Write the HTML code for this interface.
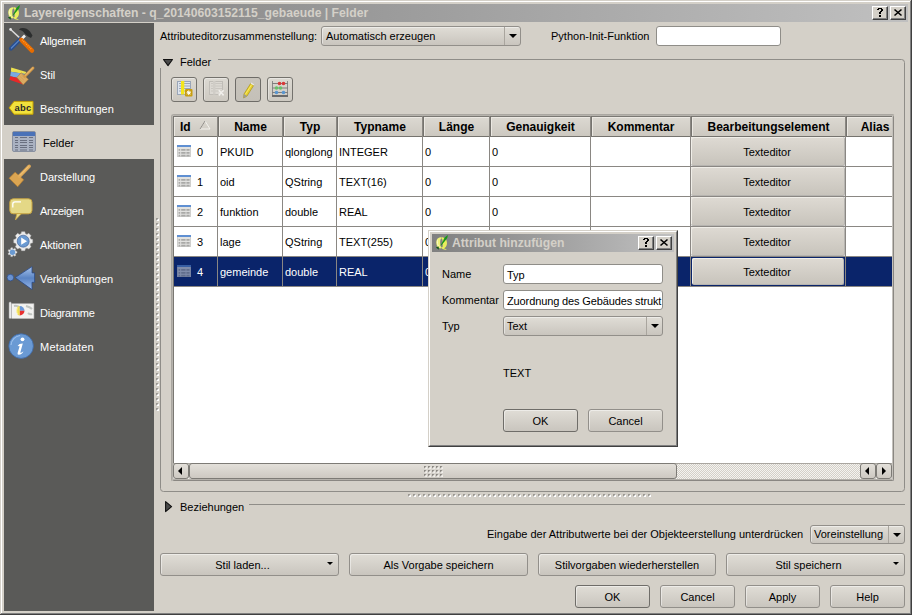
<!DOCTYPE html>
<html><head><meta charset="utf-8">
<style>
*{box-sizing:border-box;margin:0;padding:0}
html,body{width:912px;height:615px;overflow:hidden;background:#d4d0c8;position:relative;font-family:"Liberation Sans",sans-serif;font-size:11px;color:#000}
.a{position:absolute}
.t{position:absolute;white-space:nowrap;font-size:11px;line-height:13px}
.b{font-weight:bold}
.w{color:#fff}
svg{position:absolute;overflow:visible}
</style></head><body>
<div class="a" style="left:1px;top:1px;width:910px;height:1px;background:#fff"></div>
<div class="a" style="left:1px;top:1px;width:1px;height:613px;background:#fff"></div>
<div class="a" style="left:910px;top:1px;width:1px;height:613px;background:#808080"></div>
<div class="a" style="left:1px;top:613px;width:910px;height:1px;background:#808080"></div>
<div class="a" style="left:911px;top:0px;width:1px;height:615px;background:#404040"></div>
<div class="a" style="left:0px;top:614px;width:912px;height:1px;background:#404040"></div>
<div class="a" style="left:4px;top:4px;width:904px;height:18px;background:linear-gradient(to right,#808080,#c0c0c0)"></div>
<svg style="left:4px;top:4px" width="20" height="18" viewBox="0 0 20 18">
<path d="M8.8 3.2 C5.1 3.4 4.2 6.5 4.3 9.2 C4.5 12.2 6.2 14.2 9.2 14.4 L9 12.8 C8.4 11.6 8.1 9.8 8.2 8 C8.3 6 8.6 4.8 9.6 4.3Z" fill="#eef27a"/>
<path d="M5.6 6.2 C5.2 8.2 5.4 10.6 6.6 12.2" stroke="#fbfcc8" stroke-width="1" fill="none"/>
<path d="M9.2 3.2 C13 3.1 15 5.8 15 9 C15 12 13.6 14.2 11 14.4 L10.6 12.9 C10.6 12 10.8 10.6 10.8 8.8 C10.8 6.5 10.4 4.8 9.6 4.4Z" fill="#e8ee5c"/>
<path d="M8.8 13.2 Q10.6 16.4 15 15.4 Q12.6 15.2 11 13Z" fill="#e8ee5c"/>
<path d="M8.4 11.4 L11.2 6.8 Q12 3.2 16 1 Q15.8 4.6 13 7 L9.2 11.6Z" fill="#17961a"/>
<path d="M3.8 13.4 L6.6 12.6 L7 15.8Z" fill="#145a16"/>
</svg>
<div class="t b" style="left:24px;top:6px;font-size:12.2px;line-height:14px;color:#d4d0c8">Layereigenschaften - q_20140603152115_gebaeude | Felder</div>
<div class="a" style="left:872px;top:6px;width:16px;height:14px;background:#d4d0c8;border-top:1px solid #fff;border-left:1px solid #fff;border-right:1px solid #404040;border-bottom:1px solid #404040;box-shadow:inset -1px -1px 0 #808080"></div>
<svg style="left:877px;top:8px" width="6" height="9" viewBox="0 0 6 9" shape-rendering="crispEdges" fill="#000"><rect x="1" y="0" width="1" height="1"/><rect x="2" y="0" width="1" height="1"/><rect x="3" y="0" width="1" height="1"/><rect x="4" y="0" width="1" height="1"/><rect x="0" y="1" width="1" height="1"/><rect x="1" y="1" width="1" height="1"/><rect x="4" y="1" width="1" height="1"/><rect x="5" y="1" width="1" height="1"/><rect x="4" y="2" width="1" height="1"/><rect x="5" y="2" width="1" height="1"/><rect x="3" y="3" width="1" height="1"/><rect x="4" y="3" width="1" height="1"/><rect x="2" y="4" width="1" height="1"/><rect x="3" y="4" width="1" height="1"/><rect x="2" y="5" width="1" height="1"/><rect x="3" y="5" width="1" height="1"/><rect x="2" y="7" width="1" height="1"/><rect x="3" y="7" width="1" height="1"/><rect x="2" y="8" width="1" height="1"/><rect x="3" y="8" width="1" height="1"/></svg>
<div class="a" style="left:890px;top:6px;width:16px;height:14px;background:#d4d0c8;border-top:1px solid #fff;border-left:1px solid #fff;border-right:1px solid #404040;border-bottom:1px solid #404040;box-shadow:inset -1px -1px 0 #808080"></div>
<svg style="left:894px;top:9px" width="8" height="7" viewBox="0 0 8 7"><path d="M0.5 0.5L7.5 6.5M7.5 0.5L0.5 6.5" stroke="#000" stroke-width="1.6"/></svg>
<div class="a" style="left:4px;top:23px;width:150px;height:588px;background:#5a5a58"></div>
<div class="a" style="left:4px;top:125px;width:150px;height:34px;background:#d4d0c8"></div>
<div class="t w" style="left:40px;top:35px;letter-spacing:-0.29px">Allgemein</div>
<div class="t w" style="left:40px;top:69px;letter-spacing:0px">Stil</div>
<div class="t w" style="left:40px;top:103px;letter-spacing:0.04px">Beschriftungen</div>
<div class="t" style="left:43px;top:137px;">Felder</div>
<div class="t w" style="left:40px;top:171px;letter-spacing:-0.04px">Darstellung</div>
<div class="t w" style="left:40px;top:205px;letter-spacing:-0.3px">Anzeigen</div>
<div class="t w" style="left:40px;top:239px;letter-spacing:-0.14px">Aktionen</div>
<div class="t w" style="left:40px;top:273px;letter-spacing:-0.08px">Verknüpfungen</div>
<div class="t w" style="left:40px;top:307px;letter-spacing:-0.25px">Diagramme</div>
<div class="t w" style="left:40px;top:341px;letter-spacing:0.22px">Metadaten</div>
<svg style="left:6px;top:25px" width="32" height="32" viewBox="0 0 32 32">
<path d="M4.4 4.2 L14.5 13.6" stroke="#d8d8d8" stroke-width="1.5" stroke-linecap="round"/><circle cx="4.6" cy="4.4" r="1.3" fill="#e8e8e8"/>
<path d="M14.5 14 L5 23.5" stroke="#2a4f8c" stroke-width="4.2" stroke-linecap="round"/>
<path d="M13.8 14.6 L5.4 23" stroke="#5a86c8" stroke-width="1.2" stroke-linecap="round"/>
<path d="M13 4.2 C16 2.2 21 3 24 6.5 L26.5 10.5 L25 13 L22 11.5 L19 9 C17.5 6.5 15.5 5.4 13 4.6Z" fill="#2c2e2e"/>
<path d="M15.5 14 L19 10.5" stroke="#f0f0f0" stroke-width="2.6"/>
<path d="M15.2 14.8 L26 25.6" stroke="#e66c00" stroke-width="4.4" stroke-linecap="round"/>
<path d="M16 14.8 L25.5 24.3" stroke="#ff9a30" stroke-width="1.4" stroke-dasharray="1 1"/>
</svg>
<svg style="left:6px;top:59px" width="32" height="32" viewBox="0 0 32 32">
<path d="M5.2 8.6 L20.3 13 L19.3 15.1 L4.9 12.8Z" fill="#ece050"/>
<path d="M4.9 12.8 L19.3 15.1 L10.9 18.75 L4.2 17.2Z" fill="#7aaae0"/>
<path d="M4.2 17.2 L10.9 18.75 L17.2 25.5 L3.4 20.8Z" fill="#e82828"/>
<path d="M10.9 18.5 L15.1 13.8 L22.4 20.3 L17.2 25.8Z" fill="#dcac64" stroke="#b07c30" stroke-width="0.6"/><path d="M12.5 19 L16 22.5 M14 17.5 L17.8 21 M15.5 16 L19.4 19.6" stroke="#c89446" stroke-width="0.5"/>
<path d="M18.8 17.2 L27 9.1" stroke="#d49a48" stroke-width="2.8" stroke-linecap="round"/><path d="M19.6 16 L26.6 9" stroke="#ecc488" stroke-width="0.9" stroke-linecap="round"/>
</svg>
<svg style="left:6px;top:93px" width="32" height="32" viewBox="0 0 32 32">
<path d="M3.2 14.8 L8 8.4 H27 V21.2 H8Z" fill="#f2e23c" stroke="#c8a400" stroke-width="1"/>
<text x="8.6" y="17.6" font-family="Liberation Sans" font-weight="bold" font-size="9.4" fill="#2a2a2a" letter-spacing="0.2">abc</text>
</svg>
<svg style="left:12px;top:131px" width="24" height="21" viewBox="0 0 24 21">
<rect x="0.5" y="0.5" width="23" height="20" rx="1.5" fill="#aab2c2" stroke="#8890a0"/>
<rect x="1" y="1" width="22" height="4" fill="#4a72b8"/>
<path d="M3 6.5H6M8 6.5H15M17 6.5H21M3 9.5H6M8 9.5H15M17 9.5H21M3 11.5H6M8 11.5H15M17 11.5H21M3 14.5H6M8 14.5H15M17 14.5H21M3 16.5H6M8 16.5H15M17 16.5H21M3 19H6M8 19H15M17 19H21" stroke="#6a7080" stroke-width="1"/>
</svg>
<svg style="left:6px;top:161px" width="32" height="32" viewBox="0 0 32 32">
<path d="M3.1 17.2 L9.1 11.2 L17.7 18.75 L11.7 25.8Z" fill="#dba552" stroke="#b88030" stroke-width="0.7"/>
<path d="M13.4 15.2 L23.2 5.2" stroke="#e0aa58" stroke-width="3.4" stroke-linecap="round"/><path d="M14.2 14.2 L22.6 5.6" stroke="#f0c880" stroke-width="1" stroke-linecap="round"/>
</svg>
<svg style="left:6px;top:195px" width="32" height="32" viewBox="0 0 32 32">
<rect x="3.8" y="3.8" width="22.2" height="15" rx="3.5" fill="#e4d886" stroke="#c8a440" stroke-width="1"/>
<path d="M10.9 18.5 L9.4 25 L15.6 18.5Z" fill="#e4d886" stroke="#c8a440" stroke-width="0.8"/>
<path d="M6.8 12.5 V9 Q6.8 6.8 9 6.8 H15" fill="none" stroke="#ffffff" stroke-width="1.3"/>
</svg>
<svg style="left:6px;top:229px" width="32" height="32" viewBox="0 0 32 32">
<path d="M24.70 10.04 L26.66 10.59 L26.66 13.81 L24.70 14.36 L24.02 15.98 L25.03 17.76 L22.76 20.03 L20.98 19.02 L19.36 19.70 L18.81 21.66 L15.59 21.66 L15.04 19.70 L13.42 19.02 L11.64 20.03 L9.37 17.76 L10.38 15.98 L9.70 14.36 L7.74 13.81 L7.74 10.59 L9.70 10.04 L10.38 8.42 L9.37 6.64 L11.64 4.37 L13.42 5.38 L15.04 4.70 L15.59 2.74 L18.81 2.74 L19.36 4.70 L20.98 5.38 L22.76 4.37 L25.03 6.64 L24.02 8.42Z" fill="#ececec" stroke="#b8b8b8" stroke-width="0.5"/>
<circle cx="17.2" cy="12.2" r="6" fill="#6a9ad2" stroke="#3a5a90" stroke-width="0.6"/>
<path d="M15.2 8.6 L21 12.2 L15.2 15.8Z" fill="#fff"/>
<path d="M9.75 22.20 L11.03 22.38 L11.03 24.02 L9.75 24.20 L9.31 25.11 L9.97 26.22 L8.68 27.25 L7.74 26.37 L6.76 26.59 L6.30 27.80 L4.69 27.43 L4.80 26.14 L4.01 25.51 L2.78 25.91 L2.07 24.42 L3.14 23.70 L3.14 22.70 L2.07 21.98 L2.78 20.49 L4.01 20.89 L4.80 20.26 L4.69 18.97 L6.30 18.60 L6.76 19.81 L7.74 20.03 L8.68 19.15 L9.97 20.18 L9.31 21.29Z" fill="#ececec" stroke="#b8b8b8" stroke-width="0.4"/>
<circle cx="6.5" cy="23.2" r="2.7" fill="#6a9ad2"/>
</svg>
<svg style="left:6px;top:263px" width="32" height="32" viewBox="0 0 32 32">
<defs><linearGradient id="vg" x1="0" y1="0" x2="0" y2="1"><stop offset="0" stop-color="#a8c4ec"/><stop offset="0.5" stop-color="#5a84c4"/><stop offset="1" stop-color="#98b8ea"/></linearGradient></defs>
<circle cx="4.4" cy="14.6" r="3.3" fill="#6a92d0" stroke="#2a4a88" stroke-width="0.7"/>
<path d="M9.1 14.6 L26 3.6 V9.9 H28.6 V19.3 H26 V26.6Z" fill="url(#vg)" stroke="#2a4a88" stroke-width="0.8"/>
</svg>
<svg style="left:6px;top:297px" width="32" height="32" viewBox="0 0 32 32">
<rect x="5.7" y="6.8" width="22.2" height="14.6" fill="#f2f2f0" stroke="#c8c8c8" stroke-width="0.6"/>
<path d="M8 9 Q12 8 14 11 M20 9 Q24 10 26 12 M22 16 Q24 18 26 17" stroke="#c0c4c0" stroke-width="2" fill="none"/>
<rect x="3.1" y="5" width="2.1" height="16.6" rx="1" fill="#f4f4f4" stroke="#b0b0b0" stroke-width="0.5"/>
<path d="M13.8 9.1 A3.2 4.7 0 0 0 13.8 18.5Z" fill="#eedc50"/><path d="M12 10.5 A2 3.5 0 0 0 12 17" stroke="#fff6b0" stroke-width="0.8" fill="none"/>
<path d="M13.8 9.1 A4.7 4.7 0 0 1 18.5 13.8 H13.8Z" fill="#6a98d8"/>
<path d="M18.5 13.8 A4.7 4.7 0 0 1 13.8 18.5 V13.8Z" fill="#e83030"/>
</svg>
<svg style="left:6px;top:331px" width="32" height="32" viewBox="0 0 32 32">
<circle cx="15.1" cy="15.1" r="12.3" fill="#6a9ad4" stroke="#3e6aa8" stroke-width="0.8"/>
<path d="M5 14 A11 11 0 0 1 14 4.5" stroke="#9cc0ec" stroke-width="1.2" fill="none"/>
<circle cx="16.5" cy="8.3" r="1.9" fill="#fff"/>
<path d="M11.6 15 Q13 12.5 16.8 12.6 L14.3 21.5 Q14.6 22.3 17.4 20.2 Q16.3 23.5 12.6 23.8 Q11.2 23.5 11.6 22 L13.6 15.2 Q12.6 15 11.6 15Z" fill="#fff"/>
</svg>
<div class="a" style="left:156px;top:218px;width:3px;height:3px;background:linear-gradient(135deg,#9c9993 0,#9c9993 40%,#fff 60%,#fff 100%)"></div>
<div class="a" style="left:156px;top:223px;width:3px;height:3px;background:linear-gradient(135deg,#9c9993 0,#9c9993 40%,#fff 60%,#fff 100%)"></div>
<div class="a" style="left:156px;top:228px;width:3px;height:3px;background:linear-gradient(135deg,#9c9993 0,#9c9993 40%,#fff 60%,#fff 100%)"></div>
<div class="a" style="left:156px;top:233px;width:3px;height:3px;background:linear-gradient(135deg,#9c9993 0,#9c9993 40%,#fff 60%,#fff 100%)"></div>
<div class="a" style="left:156px;top:238px;width:3px;height:3px;background:linear-gradient(135deg,#9c9993 0,#9c9993 40%,#fff 60%,#fff 100%)"></div>
<div class="a" style="left:156px;top:243px;width:3px;height:3px;background:linear-gradient(135deg,#9c9993 0,#9c9993 40%,#fff 60%,#fff 100%)"></div>
<div class="a" style="left:156px;top:248px;width:3px;height:3px;background:linear-gradient(135deg,#9c9993 0,#9c9993 40%,#fff 60%,#fff 100%)"></div>
<div class="a" style="left:156px;top:253px;width:3px;height:3px;background:linear-gradient(135deg,#9c9993 0,#9c9993 40%,#fff 60%,#fff 100%)"></div>
<div class="a" style="left:156px;top:258px;width:3px;height:3px;background:linear-gradient(135deg,#9c9993 0,#9c9993 40%,#fff 60%,#fff 100%)"></div>
<div class="a" style="left:156px;top:263px;width:3px;height:3px;background:linear-gradient(135deg,#9c9993 0,#9c9993 40%,#fff 60%,#fff 100%)"></div>
<div class="a" style="left:156px;top:268px;width:3px;height:3px;background:linear-gradient(135deg,#9c9993 0,#9c9993 40%,#fff 60%,#fff 100%)"></div>
<div class="a" style="left:156px;top:273px;width:3px;height:3px;background:linear-gradient(135deg,#9c9993 0,#9c9993 40%,#fff 60%,#fff 100%)"></div>
<div class="a" style="left:156px;top:278px;width:3px;height:3px;background:linear-gradient(135deg,#9c9993 0,#9c9993 40%,#fff 60%,#fff 100%)"></div>
<div class="a" style="left:156px;top:283px;width:3px;height:3px;background:linear-gradient(135deg,#9c9993 0,#9c9993 40%,#fff 60%,#fff 100%)"></div>
<div class="a" style="left:156px;top:288px;width:3px;height:3px;background:linear-gradient(135deg,#9c9993 0,#9c9993 40%,#fff 60%,#fff 100%)"></div>
<div class="a" style="left:156px;top:293px;width:3px;height:3px;background:linear-gradient(135deg,#9c9993 0,#9c9993 40%,#fff 60%,#fff 100%)"></div>
<div class="a" style="left:156px;top:298px;width:3px;height:3px;background:linear-gradient(135deg,#9c9993 0,#9c9993 40%,#fff 60%,#fff 100%)"></div>
<div class="a" style="left:156px;top:303px;width:3px;height:3px;background:linear-gradient(135deg,#9c9993 0,#9c9993 40%,#fff 60%,#fff 100%)"></div>
<div class="a" style="left:156px;top:308px;width:3px;height:3px;background:linear-gradient(135deg,#9c9993 0,#9c9993 40%,#fff 60%,#fff 100%)"></div>
<div class="a" style="left:156px;top:313px;width:3px;height:3px;background:linear-gradient(135deg,#9c9993 0,#9c9993 40%,#fff 60%,#fff 100%)"></div>
<div class="a" style="left:156px;top:318px;width:3px;height:3px;background:linear-gradient(135deg,#9c9993 0,#9c9993 40%,#fff 60%,#fff 100%)"></div>
<div class="a" style="left:156px;top:323px;width:3px;height:3px;background:linear-gradient(135deg,#9c9993 0,#9c9993 40%,#fff 60%,#fff 100%)"></div>
<div class="a" style="left:156px;top:328px;width:3px;height:3px;background:linear-gradient(135deg,#9c9993 0,#9c9993 40%,#fff 60%,#fff 100%)"></div>
<div class="a" style="left:156px;top:333px;width:3px;height:3px;background:linear-gradient(135deg,#9c9993 0,#9c9993 40%,#fff 60%,#fff 100%)"></div>
<div class="a" style="left:156px;top:338px;width:3px;height:3px;background:linear-gradient(135deg,#9c9993 0,#9c9993 40%,#fff 60%,#fff 100%)"></div>
<div class="a" style="left:156px;top:343px;width:3px;height:3px;background:linear-gradient(135deg,#9c9993 0,#9c9993 40%,#fff 60%,#fff 100%)"></div>
<div class="a" style="left:156px;top:348px;width:3px;height:3px;background:linear-gradient(135deg,#9c9993 0,#9c9993 40%,#fff 60%,#fff 100%)"></div>
<div class="a" style="left:156px;top:353px;width:3px;height:3px;background:linear-gradient(135deg,#9c9993 0,#9c9993 40%,#fff 60%,#fff 100%)"></div>
<div class="a" style="left:156px;top:358px;width:3px;height:3px;background:linear-gradient(135deg,#9c9993 0,#9c9993 40%,#fff 60%,#fff 100%)"></div>
<div class="a" style="left:156px;top:363px;width:3px;height:3px;background:linear-gradient(135deg,#9c9993 0,#9c9993 40%,#fff 60%,#fff 100%)"></div>
<div class="a" style="left:156px;top:368px;width:3px;height:3px;background:linear-gradient(135deg,#9c9993 0,#9c9993 40%,#fff 60%,#fff 100%)"></div>
<div class="a" style="left:156px;top:373px;width:3px;height:3px;background:linear-gradient(135deg,#9c9993 0,#9c9993 40%,#fff 60%,#fff 100%)"></div>
<div class="a" style="left:156px;top:378px;width:3px;height:3px;background:linear-gradient(135deg,#9c9993 0,#9c9993 40%,#fff 60%,#fff 100%)"></div>
<div class="a" style="left:156px;top:383px;width:3px;height:3px;background:linear-gradient(135deg,#9c9993 0,#9c9993 40%,#fff 60%,#fff 100%)"></div>
<div class="a" style="left:156px;top:388px;width:3px;height:3px;background:linear-gradient(135deg,#9c9993 0,#9c9993 40%,#fff 60%,#fff 100%)"></div>
<div class="a" style="left:156px;top:393px;width:3px;height:3px;background:linear-gradient(135deg,#9c9993 0,#9c9993 40%,#fff 60%,#fff 100%)"></div>
<div class="a" style="left:156px;top:398px;width:3px;height:3px;background:linear-gradient(135deg,#9c9993 0,#9c9993 40%,#fff 60%,#fff 100%)"></div>
<div class="a" style="left:156px;top:403px;width:3px;height:3px;background:linear-gradient(135deg,#9c9993 0,#9c9993 40%,#fff 60%,#fff 100%)"></div>
<div class="a" style="left:156px;top:408px;width:3px;height:3px;background:linear-gradient(135deg,#9c9993 0,#9c9993 40%,#fff 60%,#fff 100%)"></div>
<div class="t" style="left:160px;top:30px;">Attributeditorzusammenstellung:</div>
<div class="a" style="left:321px;top:26px;width:200px;height:20px;border:1px solid #928f8a;border-radius:3px;background:linear-gradient(#e0ddd6,#c9c5be);box-shadow:inset 1px 1px 0 rgba(255,255,255,.45)"></div>
<div class="a" style="left:504px;top:27px;width:1px;height:18px;background:#a9a59e"></div>
<div class="a" style="left:508.5px;top:34.0px;width:0;height:0;border-left:4px solid transparent;border-right:4px solid transparent;border-top:4px solid #000"></div>
<div class="t" style="left:326px;top:30px;">Automatisch erzeugen</div>
<div class="t" style="left:551px;top:30px;">Python-Init-Funktion</div>
<div class="a" style="left:656px;top:26px;width:125px;height:20px;border:1px solid #8f8d88;border-radius:3px;background:#fff"></div>
<svg style="left:162px;top:58px" width="12" height="9" viewBox="0 0 12 9"><path d="M1.5 1.5H10.5L6 7.6Z" fill="#4a4a4a" stroke="#111" stroke-width="1.1" stroke-linejoin="round"/></svg>
<div class="t" style="left:180px;top:56px;">Felder</div>
<svg style="left:0;top:0" width="912" height="615" viewBox="0 0 912 615"><path d="M218 59.5H901.5Q904.5 59.5 904.5 62.5V488.5Q904.5 491.5 901.5 491.5H163.5Q160.5 491.5 160.5 488.5V68" fill="none" stroke="#8f8d88" stroke-width="1"/></svg>
<div class="a" style="left:171px;top:77px;width:26px;height:25px;border:1px solid #74726d;border-radius:3px;background:linear-gradient(#dcd9d2,#cdc9c1);box-shadow:inset 1px 1px 0 rgba(255,255,255,.35)"></div>
<div class="a" style="left:203px;top:77px;width:26px;height:25px;border:1px solid #74726d;border-radius:3px;background:linear-gradient(#dcd9d2,#cdc9c1);box-shadow:inset 1px 1px 0 rgba(255,255,255,.35)"></div>
<div class="a" style="left:235px;top:77px;width:26px;height:25px;border:1px solid #6e6c68;border-radius:3px;background:linear-gradient(#c8c4bc,#c4c0b8)"></div>
<div class="a" style="left:267px;top:77px;width:26px;height:25px;border:1px solid #74726d;border-radius:3px;background:linear-gradient(#dcd9d2,#cdc9c1);box-shadow:inset 1px 1px 0 rgba(255,255,255,.35)"></div>
<svg style="left:177px;top:80px" width="16" height="17" viewBox="0 0 16 17">
<rect x="0.5" y="1.5" width="13" height="13" fill="#dde4ee" stroke="#9aa6b8" stroke-width="1"/>
<path d="M2 3.5H13M2 6H13M2 8.5H13M2 11H13" stroke="#8a96a8" stroke-width="0.8"/>
<rect x="4" y="1" width="3.3" height="13.5" fill="#f4e61c"/>
<rect x="8" y="9" width="7.5" height="7.5" rx="1" fill="#c89e10"/>
<path d="M11.75 10.4V15.1M9.6 12.75H13.9M10.2 11.2L13.3 14.3M13.3 11.2L10.2 14.3" stroke="#fff" stroke-width="1"/>
</svg>
<svg style="left:209px;top:80px" width="16" height="17" viewBox="0 0 16 17">
<rect x="0.5" y="1.5" width="13" height="13" fill="#dcd9d3" stroke="#c0bdb7" stroke-width="1"/>
<path d="M2 3.5H13M2 6H13M2 8.5H13M2 11H13" stroke="#c4c1bb" stroke-width="0.8"/>
<rect x="4" y="1" width="2.5" height="13.5" fill="#d0cdc7"/>
<path d="M9.8 10.2L14.6 15.4M14.6 10.2L9.8 15.4" stroke="#f2f0ec" stroke-width="1.6"/>
</svg>
<svg style="left:239px;top:80px" width="18" height="20" viewBox="0 0 18 20">
<path d="M4.6 18 L5 14 L11.6 3.6 L14.6 5.6 L8 16Z" fill="#e8d030" stroke="#a08a10" stroke-width="0.6"/>
<path d="M6.2 14.6 L12.8 4.4" stroke="#f8ec70" stroke-width="0.9"/>
<path d="M4.6 18 L5 14 L8 16Z" fill="#9a9a9a"/>
<path d="M11.6 3.6 L14.6 5.6 L15.2 4.4 L12.4 2.6Z" fill="#e8e8e8"/>
</svg>
<svg style="left:271px;top:80px" width="18" height="18" viewBox="0 0 18 18">
<path d="M1.5 1 V16 M16.5 1 V16" stroke="#8a8a8a" stroke-width="1"/>
<path d="M1.5 3.5H16.5M1.5 8H16.5M1.5 12.5H16.5" stroke="#6a6a6a" stroke-width="0.8"/>
<rect x="1" y="15" width="16" height="2" fill="#6a6a6a"/>
<circle cx="8.5" cy="3.5" r="1.8" fill="#d83838"/><circle cx="12.5" cy="3.5" r="1.8" fill="#d83838"/>
<circle cx="5.5" cy="8" r="1.8" fill="#6ac06a"/><circle cx="9.5" cy="8" r="1.8" fill="#6ac06a"/>
<circle cx="5.5" cy="12.5" r="1.8" fill="#5a96d0"/><circle cx="12.5" cy="12.5" r="1.8" fill="#5a96d0"/>
</svg>
<div class="a" style="left:171px;top:114px;width:724px;height:368px;border:1px solid #aaa7a1;border-right-color:transparent;border-bottom-color:transparent;border-radius:3px"></div>
<div class="a" style="left:172px;top:115px;width:722px;height:366px;border:1px solid #b6b3ad;border-right-color:#8a8782;border-bottom-color:#8a8782;border-radius:2px;background:#fff"></div>
<div class="a" style="left:173px;top:116px;width:1px;height:364px;background:#7a7873"></div>
<div class="a" style="left:174px;top:116px;width:718px;height:21px;background:linear-gradient(#dcd9d2,#ccc8c0);border-top:1px solid #7a7873;border-bottom:1px solid #75736e;box-shadow:inset 1px 1px 0 #ebe8e2"></div>
<div class="a" style="left:217px;top:116px;width:1px;height:21px;background:#8a8782"></div>
<div class="a" style="left:218px;top:116px;width:1px;height:21px;background:#75736e"></div>
<div class="a" style="left:219px;top:117px;width:1px;height:19px;background:#ebe8e2"></div>
<div class="a" style="left:282px;top:116px;width:1px;height:21px;background:#8a8782"></div>
<div class="a" style="left:283px;top:116px;width:1px;height:21px;background:#75736e"></div>
<div class="a" style="left:284px;top:117px;width:1px;height:19px;background:#ebe8e2"></div>
<div class="a" style="left:336px;top:116px;width:1px;height:21px;background:#8a8782"></div>
<div class="a" style="left:337px;top:116px;width:1px;height:21px;background:#75736e"></div>
<div class="a" style="left:338px;top:117px;width:1px;height:19px;background:#ebe8e2"></div>
<div class="a" style="left:422px;top:116px;width:1px;height:21px;background:#8a8782"></div>
<div class="a" style="left:423px;top:116px;width:1px;height:21px;background:#75736e"></div>
<div class="a" style="left:424px;top:117px;width:1px;height:19px;background:#ebe8e2"></div>
<div class="a" style="left:489px;top:116px;width:1px;height:21px;background:#8a8782"></div>
<div class="a" style="left:490px;top:116px;width:1px;height:21px;background:#75736e"></div>
<div class="a" style="left:491px;top:117px;width:1px;height:19px;background:#ebe8e2"></div>
<div class="a" style="left:590px;top:116px;width:1px;height:21px;background:#8a8782"></div>
<div class="a" style="left:591px;top:116px;width:1px;height:21px;background:#75736e"></div>
<div class="a" style="left:592px;top:117px;width:1px;height:19px;background:#ebe8e2"></div>
<div class="a" style="left:690px;top:116px;width:1px;height:21px;background:#8a8782"></div>
<div class="a" style="left:691px;top:116px;width:1px;height:21px;background:#75736e"></div>
<div class="a" style="left:692px;top:117px;width:1px;height:19px;background:#ebe8e2"></div>
<div class="a" style="left:845px;top:116px;width:1px;height:21px;background:#8a8782"></div>
<div class="a" style="left:846px;top:116px;width:1px;height:21px;background:#75736e"></div>
<div class="a" style="left:847px;top:117px;width:1px;height:19px;background:#ebe8e2"></div>
<div class="t b" style="left:180px;top:121px;font-size:12px">Id</div>
<div class="t b" style="left:150.5px;width:200px;text-align:center;top:121px;font-size:12px">Name</div>
<div class="t b" style="left:210.0px;width:200px;text-align:center;top:121px;font-size:12px">Typ</div>
<div class="t b" style="left:280.0px;width:200px;text-align:center;top:121px;font-size:12px">Typname</div>
<div class="t b" style="left:356.5px;width:200px;text-align:center;top:121px;font-size:12px">Länge</div>
<div class="t b" style="left:440.5px;width:200px;text-align:center;top:121px;font-size:12px">Genauigkeit</div>
<div class="t b" style="left:541.0px;width:200px;text-align:center;top:121px;font-size:12px">Kommentar</div>
<div class="t b" style="left:668.5px;width:200px;text-align:center;top:121px;font-size:12px">Bearbeitungselement</div>
<div class="t b" style="left:775px;width:200px;text-align:center;top:121px;font-size:12px">Alias</div>
<svg style="left:199px;top:120px" width="12" height="10" viewBox="0 0 12 10"><path d="M6 1L11 9H1Z" fill="none" stroke="#f4f2ee" stroke-width="1"/><path d="M6 1L1 9" stroke="#8e8b86" stroke-width="1"/></svg>
<div class="a" style="left:174px;top:166px;width:718px;height:1px;background:#8a8783"></div>
<div class="a" style="left:217px;top:137px;width:1px;height:30px;background:#8a8783"></div>
<div class="a" style="left:282px;top:137px;width:1px;height:30px;background:#8a8783"></div>
<div class="a" style="left:336px;top:137px;width:1px;height:30px;background:#8a8783"></div>
<div class="a" style="left:422px;top:137px;width:1px;height:30px;background:#8a8783"></div>
<div class="a" style="left:489px;top:137px;width:1px;height:30px;background:#8a8783"></div>
<div class="a" style="left:590px;top:137px;width:1px;height:30px;background:#8a8783"></div>
<div class="a" style="left:690px;top:137px;width:1px;height:30px;background:#8a8783"></div>
<div class="a" style="left:845px;top:137px;width:1px;height:30px;background:#8a8783"></div>
<svg style="left:177px;top:145px;opacity:1" width="14" height="12" viewBox="0 0 14 12"><rect x="0.5" y="0.5" width="13" height="11" fill="#e2e2e0" stroke="#cfcfcd"/><rect x="0" y="0" width="14" height="2" fill="#5f8fd2"/><path d="M1.6 4.8H3.2M4.2 4.8H8.6M9.4 4.8H12.6M1.6 7.8H3.2M4.2 7.8H8.6M9.4 7.8H12.6M1.6 10.6H3.2M4.2 10.6H8.6M9.4 10.6H12.6" stroke="#a9a9a7" stroke-width="1.7"/></svg>
<div class="t" style="left:197px;top:146px;">0</div>
<div class="t" style="left:220px;top:146px;">PKUID</div>
<div class="t" style="left:285px;top:146px;">qlonglong</div>
<div class="t" style="left:339px;top:146px;">INTEGER</div>
<div class="t" style="left:425px;top:146px;">0</div>
<div class="t" style="left:492px;top:146px;">0</div>
<div class="a" style="left:691px;top:137px;width:154px;height:29px;border-right:1px solid #b6b4b0;border-bottom:1px solid #b6b4b0;border-radius:2px;background:linear-gradient(#dedad3,#c8c4bc);box-shadow:inset 1px 1px 0 #f0eee8"></div>
<div class="t" style="left:617.0px;width:300px;text-align:center;top:146px;">Texteditor</div>
<div class="a" style="left:174px;top:196px;width:718px;height:1px;background:#8a8783"></div>
<div class="a" style="left:217px;top:167px;width:1px;height:30px;background:#8a8783"></div>
<div class="a" style="left:282px;top:167px;width:1px;height:30px;background:#8a8783"></div>
<div class="a" style="left:336px;top:167px;width:1px;height:30px;background:#8a8783"></div>
<div class="a" style="left:422px;top:167px;width:1px;height:30px;background:#8a8783"></div>
<div class="a" style="left:489px;top:167px;width:1px;height:30px;background:#8a8783"></div>
<div class="a" style="left:590px;top:167px;width:1px;height:30px;background:#8a8783"></div>
<div class="a" style="left:690px;top:167px;width:1px;height:30px;background:#8a8783"></div>
<div class="a" style="left:845px;top:167px;width:1px;height:30px;background:#8a8783"></div>
<svg style="left:177px;top:175px;opacity:1" width="14" height="12" viewBox="0 0 14 12"><rect x="0.5" y="0.5" width="13" height="11" fill="#e2e2e0" stroke="#cfcfcd"/><rect x="0" y="0" width="14" height="2" fill="#5f8fd2"/><path d="M1.6 4.8H3.2M4.2 4.8H8.6M9.4 4.8H12.6M1.6 7.8H3.2M4.2 7.8H8.6M9.4 7.8H12.6M1.6 10.6H3.2M4.2 10.6H8.6M9.4 10.6H12.6" stroke="#a9a9a7" stroke-width="1.7"/></svg>
<div class="t" style="left:197px;top:176px;">1</div>
<div class="t" style="left:220px;top:176px;">oid</div>
<div class="t" style="left:285px;top:176px;">QString</div>
<div class="t" style="left:339px;top:176px;">TEXT(16)</div>
<div class="t" style="left:425px;top:176px;">0</div>
<div class="t" style="left:492px;top:176px;">0</div>
<div class="a" style="left:691px;top:167px;width:154px;height:29px;border-right:1px solid #b6b4b0;border-bottom:1px solid #b6b4b0;border-radius:2px;background:linear-gradient(#dedad3,#c8c4bc);box-shadow:inset 1px 1px 0 #f0eee8"></div>
<div class="t" style="left:617.0px;width:300px;text-align:center;top:176px;">Texteditor</div>
<div class="a" style="left:174px;top:226px;width:718px;height:1px;background:#8a8783"></div>
<div class="a" style="left:217px;top:197px;width:1px;height:30px;background:#8a8783"></div>
<div class="a" style="left:282px;top:197px;width:1px;height:30px;background:#8a8783"></div>
<div class="a" style="left:336px;top:197px;width:1px;height:30px;background:#8a8783"></div>
<div class="a" style="left:422px;top:197px;width:1px;height:30px;background:#8a8783"></div>
<div class="a" style="left:489px;top:197px;width:1px;height:30px;background:#8a8783"></div>
<div class="a" style="left:590px;top:197px;width:1px;height:30px;background:#8a8783"></div>
<div class="a" style="left:690px;top:197px;width:1px;height:30px;background:#8a8783"></div>
<div class="a" style="left:845px;top:197px;width:1px;height:30px;background:#8a8783"></div>
<svg style="left:177px;top:205px;opacity:1" width="14" height="12" viewBox="0 0 14 12"><rect x="0.5" y="0.5" width="13" height="11" fill="#e2e2e0" stroke="#cfcfcd"/><rect x="0" y="0" width="14" height="2" fill="#5f8fd2"/><path d="M1.6 4.8H3.2M4.2 4.8H8.6M9.4 4.8H12.6M1.6 7.8H3.2M4.2 7.8H8.6M9.4 7.8H12.6M1.6 10.6H3.2M4.2 10.6H8.6M9.4 10.6H12.6" stroke="#a9a9a7" stroke-width="1.7"/></svg>
<div class="t" style="left:197px;top:206px;">2</div>
<div class="t" style="left:220px;top:206px;">funktion</div>
<div class="t" style="left:285px;top:206px;">double</div>
<div class="t" style="left:339px;top:206px;">REAL</div>
<div class="t" style="left:425px;top:206px;">0</div>
<div class="t" style="left:492px;top:206px;">0</div>
<div class="a" style="left:691px;top:197px;width:154px;height:29px;border-right:1px solid #b6b4b0;border-bottom:1px solid #b6b4b0;border-radius:2px;background:linear-gradient(#dedad3,#c8c4bc);box-shadow:inset 1px 1px 0 #f0eee8"></div>
<div class="t" style="left:617.0px;width:300px;text-align:center;top:206px;">Texteditor</div>
<div class="a" style="left:174px;top:256px;width:718px;height:1px;background:#8a8783"></div>
<div class="a" style="left:217px;top:227px;width:1px;height:30px;background:#8a8783"></div>
<div class="a" style="left:282px;top:227px;width:1px;height:30px;background:#8a8783"></div>
<div class="a" style="left:336px;top:227px;width:1px;height:30px;background:#8a8783"></div>
<div class="a" style="left:422px;top:227px;width:1px;height:30px;background:#8a8783"></div>
<div class="a" style="left:489px;top:227px;width:1px;height:30px;background:#8a8783"></div>
<div class="a" style="left:590px;top:227px;width:1px;height:30px;background:#8a8783"></div>
<div class="a" style="left:690px;top:227px;width:1px;height:30px;background:#8a8783"></div>
<div class="a" style="left:845px;top:227px;width:1px;height:30px;background:#8a8783"></div>
<svg style="left:177px;top:235px;opacity:1" width="14" height="12" viewBox="0 0 14 12"><rect x="0.5" y="0.5" width="13" height="11" fill="#e2e2e0" stroke="#cfcfcd"/><rect x="0" y="0" width="14" height="2" fill="#5f8fd2"/><path d="M1.6 4.8H3.2M4.2 4.8H8.6M9.4 4.8H12.6M1.6 7.8H3.2M4.2 7.8H8.6M9.4 7.8H12.6M1.6 10.6H3.2M4.2 10.6H8.6M9.4 10.6H12.6" stroke="#a9a9a7" stroke-width="1.7"/></svg>
<div class="t" style="left:197px;top:236px;">3</div>
<div class="t" style="left:220px;top:236px;">lage</div>
<div class="t" style="left:285px;top:236px;">QString</div>
<div class="t" style="left:339px;top:236px;">TEXT(255)</div>
<div class="t" style="left:425px;top:236px;">0</div>
<div class="t" style="left:492px;top:236px;">0</div>
<div class="a" style="left:691px;top:227px;width:154px;height:29px;border-right:1px solid #b6b4b0;border-bottom:1px solid #b6b4b0;border-radius:2px;background:linear-gradient(#dedad3,#c8c4bc);box-shadow:inset 1px 1px 0 #f0eee8"></div>
<div class="t" style="left:617.0px;width:300px;text-align:center;top:236px;">Texteditor</div>
<div class="a" style="left:174px;top:257px;width:718px;height:29px;background:#0a246a"></div>
<div class="a" style="left:174px;top:286px;width:718px;height:1px;background:#8a8783"></div>
<div class="a" style="left:217px;top:257px;width:1px;height:30px;background:#8a8783"></div>
<div class="a" style="left:282px;top:257px;width:1px;height:30px;background:#8a8783"></div>
<div class="a" style="left:336px;top:257px;width:1px;height:30px;background:#8a8783"></div>
<div class="a" style="left:422px;top:257px;width:1px;height:30px;background:#8a8783"></div>
<div class="a" style="left:489px;top:257px;width:1px;height:30px;background:#8a8783"></div>
<div class="a" style="left:590px;top:257px;width:1px;height:30px;background:#8a8783"></div>
<div class="a" style="left:690px;top:257px;width:1px;height:30px;background:#8a8783"></div>
<div class="a" style="left:845px;top:257px;width:1px;height:30px;background:#8a8783"></div>
<svg style="left:177px;top:265px;opacity:0.55" width="14" height="12" viewBox="0 0 14 12"><rect x="0.5" y="0.5" width="13" height="11" fill="#e2e2e0" stroke="#cfcfcd"/><rect x="0" y="0" width="14" height="2" fill="#5f8fd2"/><path d="M1.6 4.8H3.2M4.2 4.8H8.6M9.4 4.8H12.6M1.6 7.8H3.2M4.2 7.8H8.6M9.4 7.8H12.6M1.6 10.6H3.2M4.2 10.6H8.6M9.4 10.6H12.6" stroke="#a9a9a7" stroke-width="1.7"/></svg>
<div class="t w" style="left:197px;top:266px;">4</div>
<div class="t w" style="left:220px;top:266px;">gemeinde</div>
<div class="t w" style="left:285px;top:266px;">double</div>
<div class="t w" style="left:339px;top:266px;">REAL</div>
<div class="t w" style="left:425px;top:266px;">0</div>
<div class="t w" style="left:492px;top:266px;">0</div>
<div class="a" style="left:691px;top:257px;width:154px;height:29px;background:#0a246a"></div>
<div class="a" style="left:692px;top:258px;width:152px;height:27px;border-right:1px solid #b6b4b0;border-bottom:1px solid #b6b4b0;border-radius:2px;background:linear-gradient(#dedad3,#c8c4bc);box-shadow:inset 1px 1px 0 #f0eee8"></div>
<div class="t" style="left:617.0px;width:300px;text-align:center;top:266px;">Texteditor</div>
<div class="a" style="left:173px;top:463px;width:719px;height:16px;background:repeating-conic-gradient(#d4d0c8 0 25%,#f4f3f0 0 50%) 0 0/2px 2px"></div>
<div class="a" style="left:173px;top:463px;width:719px;height:1px;background:#a9a6a0"></div>
<div class="a" style="left:173px;top:479px;width:720px;height:1px;background:#b4b1ab"></div>
<div class="a" style="left:892px;top:116px;width:1px;height:364px;background:#c4c1bb"></div>
<div class="a" style="left:173px;top:463px;width:16px;height:16px;border:1px solid #7d7b76;border-radius:3px;background:linear-gradient(#e3e0da,#cdc9c2)"></div>
<div class="a" style="left:189px;top:463px;width:488px;height:16px;border:1px solid #7d7b76;border-radius:3px;background:linear-gradient(#e3e0da,#cdc9c2)"></div>
<div class="a" style="left:860px;top:463px;width:16px;height:16px;border:1px solid #7d7b76;border-radius:3px;background:linear-gradient(#e3e0da,#cdc9c2)"></div>
<div class="a" style="left:876px;top:463px;width:16px;height:16px;border:1px solid #7d7b76;border-radius:3px;background:linear-gradient(#e3e0da,#cdc9c2)"></div>
<div class="a" style="left:178px;top:467px;width:0;height:0;border-top:4px solid transparent;border-bottom:4px solid transparent;border-right:4px solid #000"></div>
<div class="a" style="left:865px;top:467px;width:0;height:0;border-top:4px solid transparent;border-bottom:4px solid transparent;border-right:4px solid #000"></div>
<div class="a" style="left:882px;top:467px;width:0;height:0;border-top:4px solid transparent;border-bottom:4px solid transparent;border-left:4px solid #000"></div>
<div class="a" style="left:424px;top:466px;width:3px;height:3px;background:linear-gradient(135deg,#8a8782 0,#8a8782 30%,#d6d3cd 50%,#f0eeea 70%,#f0eeea 100%)"></div>
<div class="a" style="left:424px;top:470px;width:3px;height:3px;background:linear-gradient(135deg,#8a8782 0,#8a8782 30%,#d6d3cd 50%,#f0eeea 70%,#f0eeea 100%)"></div>
<div class="a" style="left:424px;top:474px;width:3px;height:3px;background:linear-gradient(135deg,#8a8782 0,#8a8782 30%,#d6d3cd 50%,#f0eeea 70%,#f0eeea 100%)"></div>
<div class="a" style="left:428px;top:466px;width:3px;height:3px;background:linear-gradient(135deg,#8a8782 0,#8a8782 30%,#d6d3cd 50%,#f0eeea 70%,#f0eeea 100%)"></div>
<div class="a" style="left:428px;top:470px;width:3px;height:3px;background:linear-gradient(135deg,#8a8782 0,#8a8782 30%,#d6d3cd 50%,#f0eeea 70%,#f0eeea 100%)"></div>
<div class="a" style="left:428px;top:474px;width:3px;height:3px;background:linear-gradient(135deg,#8a8782 0,#8a8782 30%,#d6d3cd 50%,#f0eeea 70%,#f0eeea 100%)"></div>
<div class="a" style="left:432px;top:466px;width:3px;height:3px;background:linear-gradient(135deg,#8a8782 0,#8a8782 30%,#d6d3cd 50%,#f0eeea 70%,#f0eeea 100%)"></div>
<div class="a" style="left:432px;top:470px;width:3px;height:3px;background:linear-gradient(135deg,#8a8782 0,#8a8782 30%,#d6d3cd 50%,#f0eeea 70%,#f0eeea 100%)"></div>
<div class="a" style="left:432px;top:474px;width:3px;height:3px;background:linear-gradient(135deg,#8a8782 0,#8a8782 30%,#d6d3cd 50%,#f0eeea 70%,#f0eeea 100%)"></div>
<div class="a" style="left:436px;top:466px;width:3px;height:3px;background:linear-gradient(135deg,#8a8782 0,#8a8782 30%,#d6d3cd 50%,#f0eeea 70%,#f0eeea 100%)"></div>
<div class="a" style="left:436px;top:470px;width:3px;height:3px;background:linear-gradient(135deg,#8a8782 0,#8a8782 30%,#d6d3cd 50%,#f0eeea 70%,#f0eeea 100%)"></div>
<div class="a" style="left:436px;top:474px;width:3px;height:3px;background:linear-gradient(135deg,#8a8782 0,#8a8782 30%,#d6d3cd 50%,#f0eeea 70%,#f0eeea 100%)"></div>
<div class="a" style="left:440px;top:466px;width:3px;height:3px;background:linear-gradient(135deg,#8a8782 0,#8a8782 30%,#d6d3cd 50%,#f0eeea 70%,#f0eeea 100%)"></div>
<div class="a" style="left:440px;top:470px;width:3px;height:3px;background:linear-gradient(135deg,#8a8782 0,#8a8782 30%,#d6d3cd 50%,#f0eeea 70%,#f0eeea 100%)"></div>
<div class="a" style="left:440px;top:474px;width:3px;height:3px;background:linear-gradient(135deg,#8a8782 0,#8a8782 30%,#d6d3cd 50%,#f0eeea 70%,#f0eeea 100%)"></div>
<div class="a" style="left:408px;top:494px;width:3px;height:3px;background:linear-gradient(135deg,#9c9993 0,#9c9993 40%,#fff 60%,#fff 100%)"></div>
<div class="a" style="left:413px;top:494px;width:3px;height:3px;background:linear-gradient(135deg,#9c9993 0,#9c9993 40%,#fff 60%,#fff 100%)"></div>
<div class="a" style="left:418px;top:494px;width:3px;height:3px;background:linear-gradient(135deg,#9c9993 0,#9c9993 40%,#fff 60%,#fff 100%)"></div>
<div class="a" style="left:423px;top:494px;width:3px;height:3px;background:linear-gradient(135deg,#9c9993 0,#9c9993 40%,#fff 60%,#fff 100%)"></div>
<div class="a" style="left:428px;top:494px;width:3px;height:3px;background:linear-gradient(135deg,#9c9993 0,#9c9993 40%,#fff 60%,#fff 100%)"></div>
<div class="a" style="left:433px;top:494px;width:3px;height:3px;background:linear-gradient(135deg,#9c9993 0,#9c9993 40%,#fff 60%,#fff 100%)"></div>
<div class="a" style="left:438px;top:494px;width:3px;height:3px;background:linear-gradient(135deg,#9c9993 0,#9c9993 40%,#fff 60%,#fff 100%)"></div>
<div class="a" style="left:443px;top:494px;width:3px;height:3px;background:linear-gradient(135deg,#9c9993 0,#9c9993 40%,#fff 60%,#fff 100%)"></div>
<div class="a" style="left:448px;top:494px;width:3px;height:3px;background:linear-gradient(135deg,#9c9993 0,#9c9993 40%,#fff 60%,#fff 100%)"></div>
<div class="a" style="left:453px;top:494px;width:3px;height:3px;background:linear-gradient(135deg,#9c9993 0,#9c9993 40%,#fff 60%,#fff 100%)"></div>
<div class="a" style="left:458px;top:494px;width:3px;height:3px;background:linear-gradient(135deg,#9c9993 0,#9c9993 40%,#fff 60%,#fff 100%)"></div>
<div class="a" style="left:463px;top:494px;width:3px;height:3px;background:linear-gradient(135deg,#9c9993 0,#9c9993 40%,#fff 60%,#fff 100%)"></div>
<div class="a" style="left:468px;top:494px;width:3px;height:3px;background:linear-gradient(135deg,#9c9993 0,#9c9993 40%,#fff 60%,#fff 100%)"></div>
<div class="a" style="left:473px;top:494px;width:3px;height:3px;background:linear-gradient(135deg,#9c9993 0,#9c9993 40%,#fff 60%,#fff 100%)"></div>
<div class="a" style="left:478px;top:494px;width:3px;height:3px;background:linear-gradient(135deg,#9c9993 0,#9c9993 40%,#fff 60%,#fff 100%)"></div>
<div class="a" style="left:483px;top:494px;width:3px;height:3px;background:linear-gradient(135deg,#9c9993 0,#9c9993 40%,#fff 60%,#fff 100%)"></div>
<div class="a" style="left:488px;top:494px;width:3px;height:3px;background:linear-gradient(135deg,#9c9993 0,#9c9993 40%,#fff 60%,#fff 100%)"></div>
<div class="a" style="left:493px;top:494px;width:3px;height:3px;background:linear-gradient(135deg,#9c9993 0,#9c9993 40%,#fff 60%,#fff 100%)"></div>
<div class="a" style="left:498px;top:494px;width:3px;height:3px;background:linear-gradient(135deg,#9c9993 0,#9c9993 40%,#fff 60%,#fff 100%)"></div>
<div class="a" style="left:503px;top:494px;width:3px;height:3px;background:linear-gradient(135deg,#9c9993 0,#9c9993 40%,#fff 60%,#fff 100%)"></div>
<div class="a" style="left:508px;top:494px;width:3px;height:3px;background:linear-gradient(135deg,#9c9993 0,#9c9993 40%,#fff 60%,#fff 100%)"></div>
<div class="a" style="left:513px;top:494px;width:3px;height:3px;background:linear-gradient(135deg,#9c9993 0,#9c9993 40%,#fff 60%,#fff 100%)"></div>
<div class="a" style="left:518px;top:494px;width:3px;height:3px;background:linear-gradient(135deg,#9c9993 0,#9c9993 40%,#fff 60%,#fff 100%)"></div>
<div class="a" style="left:523px;top:494px;width:3px;height:3px;background:linear-gradient(135deg,#9c9993 0,#9c9993 40%,#fff 60%,#fff 100%)"></div>
<div class="a" style="left:528px;top:494px;width:3px;height:3px;background:linear-gradient(135deg,#9c9993 0,#9c9993 40%,#fff 60%,#fff 100%)"></div>
<div class="a" style="left:533px;top:494px;width:3px;height:3px;background:linear-gradient(135deg,#9c9993 0,#9c9993 40%,#fff 60%,#fff 100%)"></div>
<div class="a" style="left:538px;top:494px;width:3px;height:3px;background:linear-gradient(135deg,#9c9993 0,#9c9993 40%,#fff 60%,#fff 100%)"></div>
<div class="a" style="left:543px;top:494px;width:3px;height:3px;background:linear-gradient(135deg,#9c9993 0,#9c9993 40%,#fff 60%,#fff 100%)"></div>
<div class="a" style="left:548px;top:494px;width:3px;height:3px;background:linear-gradient(135deg,#9c9993 0,#9c9993 40%,#fff 60%,#fff 100%)"></div>
<div class="a" style="left:553px;top:494px;width:3px;height:3px;background:linear-gradient(135deg,#9c9993 0,#9c9993 40%,#fff 60%,#fff 100%)"></div>
<div class="a" style="left:558px;top:494px;width:3px;height:3px;background:linear-gradient(135deg,#9c9993 0,#9c9993 40%,#fff 60%,#fff 100%)"></div>
<div class="a" style="left:563px;top:494px;width:3px;height:3px;background:linear-gradient(135deg,#9c9993 0,#9c9993 40%,#fff 60%,#fff 100%)"></div>
<div class="a" style="left:568px;top:494px;width:3px;height:3px;background:linear-gradient(135deg,#9c9993 0,#9c9993 40%,#fff 60%,#fff 100%)"></div>
<div class="a" style="left:573px;top:494px;width:3px;height:3px;background:linear-gradient(135deg,#9c9993 0,#9c9993 40%,#fff 60%,#fff 100%)"></div>
<div class="a" style="left:578px;top:494px;width:3px;height:3px;background:linear-gradient(135deg,#9c9993 0,#9c9993 40%,#fff 60%,#fff 100%)"></div>
<div class="a" style="left:583px;top:494px;width:3px;height:3px;background:linear-gradient(135deg,#9c9993 0,#9c9993 40%,#fff 60%,#fff 100%)"></div>
<div class="a" style="left:588px;top:494px;width:3px;height:3px;background:linear-gradient(135deg,#9c9993 0,#9c9993 40%,#fff 60%,#fff 100%)"></div>
<div class="a" style="left:593px;top:494px;width:3px;height:3px;background:linear-gradient(135deg,#9c9993 0,#9c9993 40%,#fff 60%,#fff 100%)"></div>
<div class="a" style="left:598px;top:494px;width:3px;height:3px;background:linear-gradient(135deg,#9c9993 0,#9c9993 40%,#fff 60%,#fff 100%)"></div>
<div class="a" style="left:603px;top:494px;width:3px;height:3px;background:linear-gradient(135deg,#9c9993 0,#9c9993 40%,#fff 60%,#fff 100%)"></div>
<div class="a" style="left:608px;top:494px;width:3px;height:3px;background:linear-gradient(135deg,#9c9993 0,#9c9993 40%,#fff 60%,#fff 100%)"></div>
<div class="a" style="left:613px;top:494px;width:3px;height:3px;background:linear-gradient(135deg,#9c9993 0,#9c9993 40%,#fff 60%,#fff 100%)"></div>
<div class="a" style="left:618px;top:494px;width:3px;height:3px;background:linear-gradient(135deg,#9c9993 0,#9c9993 40%,#fff 60%,#fff 100%)"></div>
<div class="a" style="left:623px;top:494px;width:3px;height:3px;background:linear-gradient(135deg,#9c9993 0,#9c9993 40%,#fff 60%,#fff 100%)"></div>
<div class="a" style="left:628px;top:494px;width:3px;height:3px;background:linear-gradient(135deg,#9c9993 0,#9c9993 40%,#fff 60%,#fff 100%)"></div>
<div class="a" style="left:633px;top:494px;width:3px;height:3px;background:linear-gradient(135deg,#9c9993 0,#9c9993 40%,#fff 60%,#fff 100%)"></div>
<div class="a" style="left:638px;top:494px;width:3px;height:3px;background:linear-gradient(135deg,#9c9993 0,#9c9993 40%,#fff 60%,#fff 100%)"></div>
<div class="a" style="left:643px;top:494px;width:3px;height:3px;background:linear-gradient(135deg,#9c9993 0,#9c9993 40%,#fff 60%,#fff 100%)"></div>
<div class="a" style="left:648px;top:494px;width:3px;height:3px;background:linear-gradient(135deg,#9c9993 0,#9c9993 40%,#fff 60%,#fff 100%)"></div>
<svg style="left:164px;top:500px" width="9" height="14" viewBox="0 0 9 14"><path d="M1.6 1.6V11.6L7.6 6.6Z" fill="#4a4a4a" stroke="#111" stroke-width="1.1" stroke-linejoin="round"/></svg>
<div class="t" style="left:180px;top:501px;">Beziehungen</div>
<div class="a" style="left:249px;top:504px;width:656px;height:1px;background:#8f8d88"></div>
<div class="t" style="left:487px;top:528px;">Eingabe der Attributwerte bei der Objekteerstellung unterdrücken</div>
<div class="a" style="left:810px;top:525px;width:95px;height:19px;border:1px solid #928f8a;border-radius:3px;background:linear-gradient(#e0ddd6,#c9c5be);box-shadow:inset 1px 1px 0 rgba(255,255,255,.45)"></div>
<div class="a" style="left:888px;top:526px;width:1px;height:17px;background:#a9a59e"></div>
<div class="a" style="left:892.5px;top:532.5px;width:0;height:0;border-left:4px solid transparent;border-right:4px solid transparent;border-top:4px solid #000"></div>
<div class="t" style="left:814px;top:528px;">Voreinstellung</div>
<div class="a" style="left:160px;top:553px;width:179px;height:23px;border:1px solid #928f8a;border-radius:3px;background:linear-gradient(#e0ddd6,#c9c5be);box-shadow:inset 1px 1px 0 rgba(255,255,255,.45);"></div>
<div class="t" style="left:92.5px;width:300px;text-align:center;top:559px;">Stil laden...</div>
<div class="a" style="left:327px;top:562px;width:0;height:0;border-left:3px solid transparent;border-right:3px solid transparent;border-top:3px solid #000"></div>
<div class="a" style="left:349px;top:553px;width:179px;height:23px;border:1px solid #928f8a;border-radius:3px;background:linear-gradient(#e0ddd6,#c9c5be);box-shadow:inset 1px 1px 0 rgba(255,255,255,.45);"></div>
<div class="t" style="left:288.5px;width:300px;text-align:center;top:559px;">Als Vorgabe speichern</div>
<div class="a" style="left:538px;top:553px;width:178px;height:23px;border:1px solid #928f8a;border-radius:3px;background:linear-gradient(#e0ddd6,#c9c5be);box-shadow:inset 1px 1px 0 rgba(255,255,255,.45);"></div>
<div class="t" style="left:477.0px;width:300px;text-align:center;top:559px;">Stilvorgaben wiederherstellen</div>
<div class="a" style="left:726px;top:553px;width:179px;height:23px;border:1px solid #928f8a;border-radius:3px;background:linear-gradient(#e0ddd6,#c9c5be);box-shadow:inset 1px 1px 0 rgba(255,255,255,.45);"></div>
<div class="t" style="left:658.5px;width:300px;text-align:center;top:559px;">Stil speichern</div>
<div class="a" style="left:893px;top:562px;width:0;height:0;border-left:3px solid transparent;border-right:3px solid transparent;border-top:3px solid #000"></div>
<div class="a" style="left:575px;top:585px;width:75px;height:23px;border:1px solid #6f6d69;border-radius:3px;background:linear-gradient(#e0ddd6,#c9c5be);box-shadow:inset 1px 1px 0 rgba(255,255,255,.45);"></div>
<div class="t" style="left:462.5px;width:300px;text-align:center;top:591px;">OK</div>
<div class="a" style="left:660px;top:585px;width:75px;height:23px;border:1px solid #928f8a;border-radius:3px;background:linear-gradient(#e0ddd6,#c9c5be);box-shadow:inset 1px 1px 0 rgba(255,255,255,.45);"></div>
<div class="t" style="left:547.5px;width:300px;text-align:center;top:591px;">Cancel</div>
<div class="a" style="left:745px;top:585px;width:75px;height:23px;border:1px solid #928f8a;border-radius:3px;background:linear-gradient(#e0ddd6,#c9c5be);box-shadow:inset 1px 1px 0 rgba(255,255,255,.45);"></div>
<div class="t" style="left:632.5px;width:300px;text-align:center;top:591px;">Apply</div>
<div class="a" style="left:830px;top:585px;width:75px;height:23px;border:1px solid #928f8a;border-radius:3px;background:linear-gradient(#e0ddd6,#c9c5be);box-shadow:inset 1px 1px 0 rgba(255,255,255,.45);"></div>
<div class="t" style="left:717.5px;width:300px;text-align:center;top:591px;">Help</div>
<div class="a" style="left:428px;top:230px;width:250px;height:217px;background:#d4d0c8;border-top:1px solid #d4d0c8;border-left:1px solid #d4d0c8;border-right:1px solid #404040;border-bottom:1px solid #404040"></div>
<div class="a" style="left:429px;top:231px;width:248px;height:215px;border-top:1px solid #fff;border-left:1px solid #fff;border-right:1px solid #808080;border-bottom:1px solid #808080"></div>
<div class="a" style="left:432px;top:234px;width:242px;height:18px;background:linear-gradient(to right,#808080,#c0c0c0)"></div>
<svg style="left:432px;top:234px" width="20" height="18" viewBox="0 0 20 18">
<path d="M8.8 3.2 C5.1 3.4 4.2 6.5 4.3 9.2 C4.5 12.2 6.2 14.2 9.2 14.4 L9 12.8 C8.4 11.6 8.1 9.8 8.2 8 C8.3 6 8.6 4.8 9.6 4.3Z" fill="#eef27a"/>
<path d="M5.6 6.2 C5.2 8.2 5.4 10.6 6.6 12.2" stroke="#fbfcc8" stroke-width="1" fill="none"/>
<path d="M9.2 3.2 C13 3.1 15 5.8 15 9 C15 12 13.6 14.2 11 14.4 L10.6 12.9 C10.6 12 10.8 10.6 10.8 8.8 C10.8 6.5 10.4 4.8 9.6 4.4Z" fill="#e8ee5c"/>
<path d="M8.8 13.2 Q10.6 16.4 15 15.4 Q12.6 15.2 11 13Z" fill="#e8ee5c"/>
<path d="M8.4 11.4 L11.2 6.8 Q12 3.2 16 1 Q15.8 4.6 13 7 L9.2 11.6Z" fill="#17961a"/>
<path d="M3.8 13.4 L6.6 12.6 L7 15.8Z" fill="#145a16"/>
</svg>
<div class="t b" style="left:452px;top:236px;font-size:12.2px;line-height:14px;color:#d4d0c8">Attribut hinzufügen</div>
<div class="a" style="left:638px;top:236px;width:16px;height:14px;background:#d4d0c8;border-top:1px solid #fff;border-left:1px solid #fff;border-right:1px solid #404040;border-bottom:1px solid #404040;box-shadow:inset -1px -1px 0 #808080"></div>
<svg style="left:643px;top:238px" width="6" height="9" viewBox="0 0 6 9" shape-rendering="crispEdges" fill="#000"><rect x="1" y="0" width="1" height="1"/><rect x="2" y="0" width="1" height="1"/><rect x="3" y="0" width="1" height="1"/><rect x="4" y="0" width="1" height="1"/><rect x="0" y="1" width="1" height="1"/><rect x="1" y="1" width="1" height="1"/><rect x="4" y="1" width="1" height="1"/><rect x="5" y="1" width="1" height="1"/><rect x="4" y="2" width="1" height="1"/><rect x="5" y="2" width="1" height="1"/><rect x="3" y="3" width="1" height="1"/><rect x="4" y="3" width="1" height="1"/><rect x="2" y="4" width="1" height="1"/><rect x="3" y="4" width="1" height="1"/><rect x="2" y="5" width="1" height="1"/><rect x="3" y="5" width="1" height="1"/><rect x="2" y="7" width="1" height="1"/><rect x="3" y="7" width="1" height="1"/><rect x="2" y="8" width="1" height="1"/><rect x="3" y="8" width="1" height="1"/></svg>
<div class="a" style="left:656px;top:236px;width:16px;height:14px;background:#d4d0c8;border-top:1px solid #fff;border-left:1px solid #fff;border-right:1px solid #404040;border-bottom:1px solid #404040;box-shadow:inset -1px -1px 0 #808080"></div>
<svg style="left:660px;top:239px" width="8" height="7" viewBox="0 0 8 7"><path d="M0.5 0.5L7.5 6.5M7.5 0.5L0.5 6.5" stroke="#000" stroke-width="1.6"/></svg>
<div class="t" style="left:442px;top:268px;">Name</div>
<div class="a" style="left:503px;top:264px;width:160px;height:20px;border:1px solid #8f8d88;border-radius:3px;background:#fff"></div>
<div class="t" style="left:507px;top:269px;">Typ</div>
<div class="t" style="left:442px;top:294px;">Kommentar</div>
<div class="a" style="left:503px;top:290px;width:160px;height:20px;border:1px solid #8f8d88;border-radius:3px;background:#fff"></div>
<div class="a" style="left:504px;top:291px;width:158px;height:18px;overflow:hidden"><div class="t" style="left:3px;top:4px;letter-spacing:-0.12px">Zuordnung des Gebäudes strukt</div></div>
<div class="t" style="left:442px;top:320px;">Typ</div>
<div class="a" style="left:503px;top:316px;width:160px;height:20px;border:1px solid #928f8a;border-radius:3px;background:linear-gradient(#e0ddd6,#c9c5be);box-shadow:inset 1px 1px 0 rgba(255,255,255,.45)"></div>
<div class="a" style="left:646px;top:317px;width:1px;height:18px;background:#a9a59e"></div>
<div class="a" style="left:650.5px;top:324.0px;width:0;height:0;border-left:4px solid transparent;border-right:4px solid transparent;border-top:4px solid #000"></div>
<div class="t" style="left:507px;top:320px;">Text</div>
<div class="t" style="left:503px;top:367px;">TEXT</div>
<div class="a" style="left:503px;top:409px;width:75px;height:23px;border:1px solid #6f6d69;border-radius:3px;background:linear-gradient(#e0ddd6,#c9c5be);box-shadow:inset 1px 1px 0 rgba(255,255,255,.45);"></div>
<div class="t" style="left:390.5px;width:300px;text-align:center;top:415px;">OK</div>
<div class="a" style="left:588px;top:409px;width:75px;height:23px;border:1px solid #928f8a;border-radius:3px;background:linear-gradient(#e0ddd6,#c9c5be);box-shadow:inset 1px 1px 0 rgba(255,255,255,.45);"></div>
<div class="t" style="left:475.5px;width:300px;text-align:center;top:415px;">Cancel</div>
</body></html>
